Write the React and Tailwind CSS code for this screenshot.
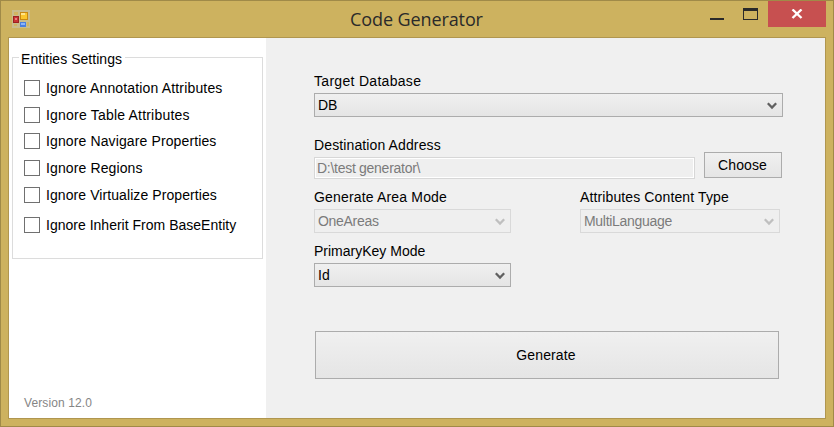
const options = [
  { label: 'Ignore Annotation Attributes', gap: 'mt-[17px]', tracking: 'tracking-[0.16px]' },
  { label: 'Ignore Table Attributes', gap: 'mt-[11px]', tracking: 'tracking-[0.2px]' },
  { label: 'Ignore Navigare Properties', gap: 'mt-[10px]', tracking: 'tracking-[0.12px]' },
  { label: 'Ignore Regions', gap: 'mt-[11px]', tracking: 'tracking-[0.12px]' },
  { label: 'Ignore Virtualize Properties', gap: 'mt-[11px]', tracking: 'tracking-[0.08px]' },
  { label: 'Ignore Inherit From BaseEntity', gap: 'mt-[14px]', tracking: 'tracking-[0.01px]' },
];

function AppIcon() {
  return (
    <svg width="18" height="18" viewBox="0 0 18 18" shapeRendering="crispEdges">
      <rect width="18" height="18" fill="#c9bd8e" />
      <path d="M2 2h4v3H2zM2 14h3v2H2zM15 12h2v4h-2z" fill="#d2b562" />
      <rect x="8" y="2" width="8" height="8" fill="#c98a12" />
      <rect x="9" y="3" width="6" height="6" fill="#fbc62c" />
      <rect x="9" y="3" width="4" height="2" fill="#ffe48a" />
      <rect x="1" y="6" width="6" height="7" fill="#9c2222" />
      <rect x="2" y="7" width="4" height="5" fill="#c93434" />
      <rect x="3" y="8" width="2" height="2" fill="#e88080" />
      <rect x="8" y="12" width="6" height="5" fill="#4a7fe0" />
      <rect x="9" y="13" width="4" height="2" fill="#8ab4fa" />
    </svg>
  );
}

function TitleBar() {
  return (
    <header className="flex h-9 items-start">
      <div className="ml-[11px] mt-[9px] w-[18px]">
        <AppIcon />
      </div>
      <h1 className="ml-[320px] mt-[5px] w-[352px] whitespace-nowrap font-['Open_Sans','Noto_Sans',sans-serif] text-[18px] leading-[26px] tracking-[-0.1px] text-[#2a2a2a]">
        Code Generator
      </h1>
      <button aria-label="Minimize" className="ml-2 mt-[17px] h-[2px] w-[14px] bg-[#2a2a2a]" />
      <button aria-label="Maximize" className="ml-[19px] mt-[7px] h-[12px] w-[15px] border border-t-[3px] border-[#2a2a2a]" />
      <button aria-label="Close" className="ml-[10px] flex h-[26px] w-[58px] justify-center bg-[#c75050] pt-2">
        <svg width="12" height="10" viewBox="0 0 12 10" className="mr-[1px]">
          <path d="M1.5 0.5L10.5 9M10.5 0.5L1.5 9" stroke="#fff" strokeWidth="2.4" fill="none" />
        </svg>
      </button>
    </header>
  );
}

function Label({ children, className = '' }) {
  return <div className={`h-4 whitespace-nowrap leading-4 ${className}`}>{children}</div>;
}

function Combo({ children, className, disabled }) {
  const tone = disabled
    ? 'border-[#d9d9d9] bg-[#efefef] text-[#7b7b7b] tracking-[-0.3px]'
    : 'border-[#acacac] bg-linear-to-b from-[#f0f0f0] to-[#e5e5e5] tracking-normal';
  return (
    <div className={`flex h-6 justify-between border pl-[3px] pr-[5px] pt-[3px] leading-4 ${tone} ${className}`}>
      <span>{children}</span>
      <svg width="10" height="8" viewBox="0 0 10 8" className="mt-[5px]">
        <path d="M0.8 1.2L5 5.6L9.2 1.2" fill="none" stroke={disabled ? '#bfbfbf' : '#606060'} strokeWidth="2.3" />
      </svg>
    </div>
  );
}

function Sidebar() {
  return (
    <aside className="flex w-[257px] flex-col bg-white pl-[3px] pt-[13px]">
      <fieldset className="h-[208px] w-[251px] border border-[#dcdcdc] pl-[11px]">
        <legend className="-ml-[5px] h-3 w-[106px] whitespace-nowrap bg-white pl-[2px] leading-4 tracking-[0.04px]">Entities Settings</legend>
        {options.map(({ label, gap, tracking }) => (
          <label key={label} className={`flex h-4 items-center ${gap}`}>
            <input type="checkbox" className="size-4 shrink-0 appearance-none border border-[#707070] bg-white" />
            <span className={`ml-[6px] whitespace-nowrap leading-4 ${tracking}`}>{label}</span>
          </label>
        ))}
      </fieldset>
      <div className="ml-3 mt-[137px] whitespace-nowrap text-[12px] leading-[14px] tracking-[0.1px] text-[#858585]">Version 12.0</div>
    </aside>
  );
}

function SettingsForm() {
  return (
    <main className="flex-1 bg-[#f0f0f0] pl-12 pt-[35px]">
      <Label className="tracking-[0.3px]">Target Database</Label>
      <Combo className="mt-1 w-[469px]">DB</Combo>
      <div className="mt-5 flex h-[42px]">
        <div>
          <Label>Destination Address</Label>
          <div className="mt-1 h-[22px] w-[381px] border border-[#d7d7d7] bg-white p-px">
            <div className="h-full bg-[#efefef] pl-px pt-px leading-4 tracking-[-0.28px] text-[#7b7b7b]">D:\test generator\</div>
          </div>
        </div>
        <button className="ml-[9px] mt-[15px] flex h-[26px] w-[78px] justify-center border border-[#acacac] bg-linear-to-b from-[#f0f0f0] to-[#e5e5e5] pr-px pt-1 leading-4">
          Choose
        </button>
      </div>
      <div className="mt-[10px] flex gap-[69px]">
        <div>
          <Label className="tracking-[0.17px]">Generate Area Mode</Label>
          <Combo className="mt-1 w-[197px]" disabled>OneAreas</Combo>
        </div>
        <div>
          <Label>Attributes Content Type</Label>
          <Combo className="mt-1 w-[200px]" disabled>MultiLanguage</Combo>
        </div>
      </div>
      <Label className="mt-[10px] tracking-normal">PrimaryKey Mode</Label>
      <Combo className="mt-1 w-[197px]">Id</Combo>
      <button className="ml-px mt-11 flex h-12 w-[464px] justify-center border border-[#acacac] bg-linear-to-b from-[#f0f0f0] to-[#e5e5e5] pr-[2px] pt-[15px] leading-4">
        Generate
      </button>
    </main>
  );
}

export default function App() {
  return (
    <div className="h-[427px] w-[834px] overflow-hidden border border-[#a08a48] bg-[#cdb25f] font-['Liberation_Sans',Arial,sans-serif] text-[14px] tracking-[0.12px] text-black">
      <TitleBar />
      <div className="ml-[7px] flex h-[382px] w-[818px] border border-[#b0964f]">
        <Sidebar />
        <SettingsForm />
      </div>
    </div>
  );
}
